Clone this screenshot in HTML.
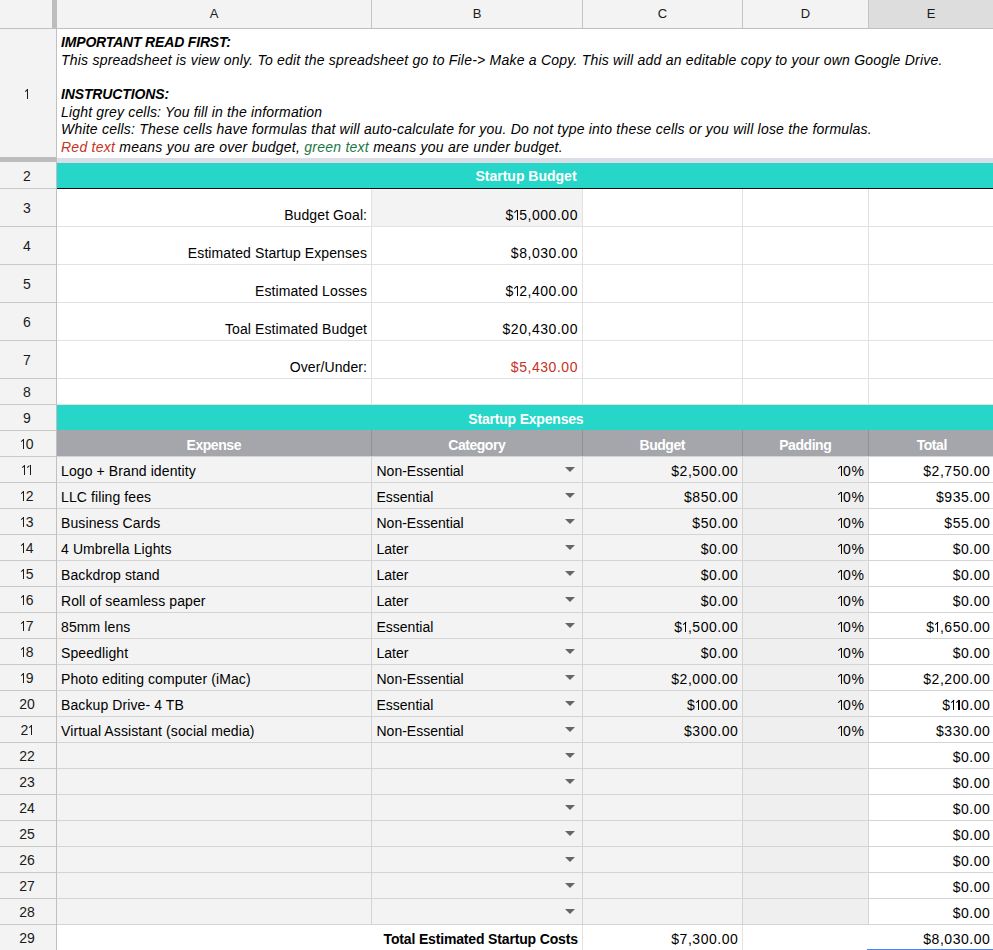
<!DOCTYPE html>
<html><head><meta charset="utf-8"><style>
html,body{margin:0;padding:0;}
body{width:993px;height:950px;position:relative;overflow:hidden;background:#fff;font-family:"Liberation Sans",sans-serif;color:#000;font-size:14px;}
.b{position:absolute;}
.t{position:absolute;white-space:nowrap;line-height:20px;}
.o{display:inline-block;position:relative;width:5.2px;height:9.7px;}
.o::before{content:'';position:absolute;left:2.65px;top:0;width:1.15px;height:9.7px;background:currentColor;}
.o::after{content:'';position:absolute;left:-0.6px;top:0;width:3.5px;height:1.15px;background:currentColor;transform:rotate(-42deg);transform-origin:100% 0;}
.o.s{width:5.2px;height:9.8px;}
.o.s::before{height:9.8px;width:1.1px;left:2.5px;}
.o.s::after{width:3.3px;height:1.1px;left:-0.8px;}
.a{position:absolute;left:564.6px;width:0;height:0;border-left:5px solid transparent;border-right:5px solid transparent;border-top:5px solid #666;}
</style></head><body>
<div class="b" style="left:0px;top:0px;width:993px;height:28px;background:#f3f3f3;"></div>
<div class="b" style="left:869px;top:0px;width:124px;height:28px;background:#dddddd;"></div>
<div class="b" style="left:0px;top:29px;width:56px;height:921px;background:#f3f3f3;"></div>
<div class="b" style="left:57px;top:163px;width:936px;height:25px;background:#26d6c9;"></div>
<div class="b" style="left:57px;top:188px;width:936px;height:1px;background:#111111;"></div>
<div class="b" style="left:372px;top:189px;width:210px;height:37px;background:#f3f3f3;"></div>
<div class="b" style="left:57px;top:405px;width:936px;height:25px;background:#26d6c9;"></div>
<div class="b" style="left:57px;top:404px;width:936px;height:1px;background:#22bdb1;"></div>
<div class="b" style="left:57px;top:430px;width:936px;height:26px;background:#a4a6ab;"></div>
<div class="b" style="left:57px;top:457px;width:685px;height:467px;background:#f3f3f3;"></div>
<div class="b" style="left:743px;top:457px;width:125px;height:467px;background:#efefef;"></div>
<div class="b" style="left:0px;top:28px;width:993px;height:1px;background:#c0c0c0;"></div>
<div class="b" style="left:371px;top:0px;width:1px;height:28px;background:#c4c4c4;"></div>
<div class="b" style="left:582px;top:0px;width:1px;height:28px;background:#c4c4c4;"></div>
<div class="b" style="left:742px;top:0px;width:1px;height:28px;background:#c4c4c4;"></div>
<div class="b" style="left:868px;top:0px;width:1px;height:28px;background:#c4c4c4;"></div>
<div class="b" style="left:52px;top:0px;width:5px;height:28px;background:#bdbdbd;"></div>
<div class="b" style="left:56px;top:28px;width:1px;height:922px;background:#c0c0c0;"></div>
<div class="b" style="left:0px;top:157px;width:56px;height:5px;background:#bcbcbc;"></div>
<div class="b" style="left:57px;top:158px;width:936px;height:5px;background:#dadde6;"></div>
<div class="b" style="left:0px;top:188px;width:56px;height:1px;background:#c8c8c8;"></div>
<div class="b" style="left:0px;top:226px;width:56px;height:1px;background:#c8c8c8;"></div>
<div class="b" style="left:0px;top:264px;width:56px;height:1px;background:#c8c8c8;"></div>
<div class="b" style="left:0px;top:302px;width:56px;height:1px;background:#c8c8c8;"></div>
<div class="b" style="left:0px;top:340px;width:56px;height:1px;background:#c8c8c8;"></div>
<div class="b" style="left:0px;top:378px;width:56px;height:1px;background:#c8c8c8;"></div>
<div class="b" style="left:0px;top:404px;width:56px;height:1px;background:#c8c8c8;"></div>
<div class="b" style="left:0px;top:430px;width:56px;height:1px;background:#c8c8c8;"></div>
<div class="b" style="left:0px;top:456px;width:56px;height:1px;background:#c8c8c8;"></div>
<div class="b" style="left:0px;top:482px;width:56px;height:1px;background:#c8c8c8;"></div>
<div class="b" style="left:0px;top:508px;width:56px;height:1px;background:#c8c8c8;"></div>
<div class="b" style="left:0px;top:534px;width:56px;height:1px;background:#c8c8c8;"></div>
<div class="b" style="left:0px;top:560px;width:56px;height:1px;background:#c8c8c8;"></div>
<div class="b" style="left:0px;top:586px;width:56px;height:1px;background:#c8c8c8;"></div>
<div class="b" style="left:0px;top:612px;width:56px;height:1px;background:#c8c8c8;"></div>
<div class="b" style="left:0px;top:638px;width:56px;height:1px;background:#c8c8c8;"></div>
<div class="b" style="left:0px;top:664px;width:56px;height:1px;background:#c8c8c8;"></div>
<div class="b" style="left:0px;top:690px;width:56px;height:1px;background:#c8c8c8;"></div>
<div class="b" style="left:0px;top:716px;width:56px;height:1px;background:#c8c8c8;"></div>
<div class="b" style="left:0px;top:742px;width:56px;height:1px;background:#c8c8c8;"></div>
<div class="b" style="left:0px;top:768px;width:56px;height:1px;background:#c8c8c8;"></div>
<div class="b" style="left:0px;top:794px;width:56px;height:1px;background:#c8c8c8;"></div>
<div class="b" style="left:0px;top:820px;width:56px;height:1px;background:#c8c8c8;"></div>
<div class="b" style="left:0px;top:846px;width:56px;height:1px;background:#c8c8c8;"></div>
<div class="b" style="left:0px;top:872px;width:56px;height:1px;background:#c8c8c8;"></div>
<div class="b" style="left:0px;top:898px;width:56px;height:1px;background:#c8c8c8;"></div>
<div class="b" style="left:0px;top:924px;width:56px;height:1px;background:#c8c8c8;"></div>
<div class="b" style="left:57px;top:226px;width:936px;height:1px;background:#e2e2e2;"></div>
<div class="b" style="left:57px;top:264px;width:936px;height:1px;background:#e2e2e2;"></div>
<div class="b" style="left:57px;top:302px;width:936px;height:1px;background:#e2e2e2;"></div>
<div class="b" style="left:57px;top:340px;width:936px;height:1px;background:#e2e2e2;"></div>
<div class="b" style="left:57px;top:378px;width:936px;height:1px;background:#e2e2e2;"></div>
<div class="b" style="left:57px;top:404px;width:936px;height:1px;background:#e2e2e2;"></div>
<div class="b" style="left:371px;top:189px;width:1px;height:216px;background:#e2e2e2;"></div>
<div class="b" style="left:582px;top:189px;width:1px;height:216px;background:#e2e2e2;"></div>
<div class="b" style="left:742px;top:189px;width:1px;height:216px;background:#e2e2e2;"></div>
<div class="b" style="left:868px;top:189px;width:1px;height:216px;background:#e2e2e2;"></div>
<div class="b" style="left:371px;top:430px;width:1px;height:26px;background:#909095;"></div>
<div class="b" style="left:582px;top:430px;width:1px;height:26px;background:#909095;"></div>
<div class="b" style="left:742px;top:430px;width:1px;height:26px;background:#909095;"></div>
<div class="b" style="left:868px;top:430px;width:1px;height:26px;background:#909095;"></div>
<div class="b" style="left:57px;top:456px;width:936px;height:1px;background:#d4d4d4;"></div>
<div class="b" style="left:57px;top:482px;width:936px;height:1px;background:#d4d4d4;"></div>
<div class="b" style="left:57px;top:508px;width:936px;height:1px;background:#d4d4d4;"></div>
<div class="b" style="left:57px;top:534px;width:936px;height:1px;background:#d4d4d4;"></div>
<div class="b" style="left:57px;top:560px;width:936px;height:1px;background:#d4d4d4;"></div>
<div class="b" style="left:57px;top:586px;width:936px;height:1px;background:#d4d4d4;"></div>
<div class="b" style="left:57px;top:612px;width:936px;height:1px;background:#d4d4d4;"></div>
<div class="b" style="left:57px;top:638px;width:936px;height:1px;background:#d4d4d4;"></div>
<div class="b" style="left:57px;top:664px;width:936px;height:1px;background:#d4d4d4;"></div>
<div class="b" style="left:57px;top:690px;width:936px;height:1px;background:#d4d4d4;"></div>
<div class="b" style="left:57px;top:716px;width:936px;height:1px;background:#d4d4d4;"></div>
<div class="b" style="left:57px;top:742px;width:936px;height:1px;background:#d4d4d4;"></div>
<div class="b" style="left:57px;top:768px;width:936px;height:1px;background:#d4d4d4;"></div>
<div class="b" style="left:57px;top:794px;width:936px;height:1px;background:#d4d4d4;"></div>
<div class="b" style="left:57px;top:820px;width:936px;height:1px;background:#d4d4d4;"></div>
<div class="b" style="left:57px;top:846px;width:936px;height:1px;background:#d4d4d4;"></div>
<div class="b" style="left:57px;top:872px;width:936px;height:1px;background:#d4d4d4;"></div>
<div class="b" style="left:57px;top:898px;width:936px;height:1px;background:#d4d4d4;"></div>
<div class="b" style="left:57px;top:924px;width:936px;height:1px;background:#d4d4d4;"></div>
<div class="b" style="left:371px;top:457px;width:1px;height:467px;background:#d4d4d4;"></div>
<div class="b" style="left:582px;top:457px;width:1px;height:467px;background:#d4d4d4;"></div>
<div class="b" style="left:742px;top:457px;width:1px;height:467px;background:#d4d4d4;"></div>
<div class="b" style="left:868px;top:457px;width:1px;height:467px;background:#d4d4d4;"></div>
<div class="b" style="left:582px;top:925px;width:1px;height:25px;background:#e2e2e2;"></div>
<div class="b" style="left:742px;top:925px;width:1px;height:25px;background:#e2e2e2;"></div>
<div class="b" style="left:867px;top:949px;width:126px;height:1px;background:#4285f4;"></div>
<div class="t" style="left:57.00px;width:314.00px;top:3.50px;text-align:center;font-size:13px;color:#1a1a1a;">A</div>
<div class="t" style="left:372.00px;width:210.00px;top:3.50px;text-align:center;font-size:13px;color:#1a1a1a;">B</div>
<div class="t" style="left:583.00px;width:159.00px;top:3.50px;text-align:center;font-size:13px;color:#1a1a1a;">C</div>
<div class="t" style="left:743.00px;width:125.00px;top:3.50px;text-align:center;font-size:13px;color:#1a1a1a;">D</div>
<div class="t" style="left:869.00px;width:124.00px;top:3.50px;text-align:center;font-size:13px;color:#1a1a1a;">E</div>
<div class="t" style="left:0.05px;width:54.00px;top:84.05px;text-align:center;letter-spacing:0.1px;color:#1a1a1a;"><span class="o s"></span></div>
<div class="t" style="left:0.05px;width:54.00px;top:166.05px;text-align:center;letter-spacing:0.1px;color:#1a1a1a;">2</div>
<div class="t" style="left:0.05px;width:54.00px;top:198.05px;text-align:center;letter-spacing:0.1px;color:#1a1a1a;">3</div>
<div class="t" style="left:0.05px;width:54.00px;top:236.05px;text-align:center;letter-spacing:0.1px;color:#1a1a1a;">4</div>
<div class="t" style="left:0.05px;width:54.00px;top:274.05px;text-align:center;letter-spacing:0.1px;color:#1a1a1a;">5</div>
<div class="t" style="left:0.05px;width:54.00px;top:312.05px;text-align:center;letter-spacing:0.1px;color:#1a1a1a;">6</div>
<div class="t" style="left:0.05px;width:54.00px;top:350.05px;text-align:center;letter-spacing:0.1px;color:#1a1a1a;">7</div>
<div class="t" style="left:0.05px;width:54.00px;top:382.05px;text-align:center;letter-spacing:0.1px;color:#1a1a1a;">8</div>
<div class="t" style="left:0.05px;width:54.00px;top:408.05px;text-align:center;letter-spacing:0.1px;color:#1a1a1a;">9</div>
<div class="t" style="left:0.05px;width:54.00px;top:434.05px;text-align:center;letter-spacing:0.1px;color:#1a1a1a;"><span class="o s"></span>0</div>
<div class="t" style="left:0.05px;width:54.00px;top:460.05px;text-align:center;letter-spacing:0.1px;color:#1a1a1a;"><span class="o s"></span><span class="o s"></span></div>
<div class="t" style="left:0.05px;width:54.00px;top:486.05px;text-align:center;letter-spacing:0.1px;color:#1a1a1a;"><span class="o s"></span>2</div>
<div class="t" style="left:0.05px;width:54.00px;top:512.05px;text-align:center;letter-spacing:0.1px;color:#1a1a1a;"><span class="o s"></span>3</div>
<div class="t" style="left:0.05px;width:54.00px;top:538.05px;text-align:center;letter-spacing:0.1px;color:#1a1a1a;"><span class="o s"></span>4</div>
<div class="t" style="left:0.05px;width:54.00px;top:564.05px;text-align:center;letter-spacing:0.1px;color:#1a1a1a;"><span class="o s"></span>5</div>
<div class="t" style="left:0.05px;width:54.00px;top:590.05px;text-align:center;letter-spacing:0.1px;color:#1a1a1a;"><span class="o s"></span>6</div>
<div class="t" style="left:0.05px;width:54.00px;top:616.05px;text-align:center;letter-spacing:0.1px;color:#1a1a1a;"><span class="o s"></span>7</div>
<div class="t" style="left:0.05px;width:54.00px;top:642.05px;text-align:center;letter-spacing:0.1px;color:#1a1a1a;"><span class="o s"></span>8</div>
<div class="t" style="left:0.05px;width:54.00px;top:668.05px;text-align:center;letter-spacing:0.1px;color:#1a1a1a;"><span class="o s"></span>9</div>
<div class="t" style="left:0.05px;width:54.00px;top:694.05px;text-align:center;letter-spacing:0.1px;color:#1a1a1a;">20</div>
<div class="t" style="left:0.05px;width:54.00px;top:720.05px;text-align:center;letter-spacing:0.1px;color:#1a1a1a;">2<span class="o s"></span></div>
<div class="t" style="left:0.05px;width:54.00px;top:746.05px;text-align:center;letter-spacing:0.1px;color:#1a1a1a;">22</div>
<div class="t" style="left:0.05px;width:54.00px;top:772.05px;text-align:center;letter-spacing:0.1px;color:#1a1a1a;">23</div>
<div class="t" style="left:0.05px;width:54.00px;top:798.05px;text-align:center;letter-spacing:0.1px;color:#1a1a1a;">24</div>
<div class="t" style="left:0.05px;width:54.00px;top:824.05px;text-align:center;letter-spacing:0.1px;color:#1a1a1a;">25</div>
<div class="t" style="left:0.05px;width:54.00px;top:850.05px;text-align:center;letter-spacing:0.1px;color:#1a1a1a;">26</div>
<div class="t" style="left:0.05px;width:54.00px;top:876.05px;text-align:center;letter-spacing:0.1px;color:#1a1a1a;">27</div>
<div class="t" style="left:0.05px;width:54.00px;top:902.05px;text-align:center;letter-spacing:0.1px;color:#1a1a1a;">28</div>
<div class="t" style="left:0.05px;width:54.00px;top:928.05px;text-align:center;letter-spacing:0.1px;color:#1a1a1a;">29</div>
<div class="t" style="left:61.00px;width:929.00px;top:32.15px;text-align:left;letter-spacing:-0.17px;font-style:italic;"><b>IMPORTANT READ FIRST:</b></div>
<div class="t" style="left:61.00px;width:929.00px;top:49.55px;text-align:left;letter-spacing:0.22px;font-style:italic;">This spreadsheet is view only. To edit the spreadsheet go to File-&gt; Make a Copy. This will add an editable copy to your own Google Drive.</div>
<div class="t" style="left:61.00px;width:929.00px;top:84.35px;text-align:left;letter-spacing:-0.13px;font-style:italic;"><b>INSTRUCTIONS:</b></div>
<div class="t" style="left:61.00px;width:929.00px;top:101.75px;text-align:left;letter-spacing:0.17px;font-style:italic;">Light grey cells: You fill in the information</div>
<div class="t" style="left:61.00px;width:929.00px;top:119.15px;text-align:left;letter-spacing:0.213px;font-style:italic;">White cells: These cells have formulas that will auto-calculate for you. Do not type into these cells or you will lose the formulas.</div>
<div class="t" style="left:61.00px;width:929.00px;top:136.55px;text-align:left;letter-spacing:0.25px;font-style:italic;"><span style="color:#c63224">Red text</span> means you are over budget, <span style="color:#217846">green text</span> means you are under budget.</div>
<div class="t" style="left:57.00px;width:938.00px;top:166.45px;text-align:center;color:#ffffff;font-weight:bold;">Startup Budget</div>
<div class="t" style="left:60.00px;width:307.10px;top:204.75px;text-align:right;letter-spacing:0.1px;">Budget Goal:</div>
<div class="t" style="left:375.00px;width:203.05px;top:204.75px;text-align:right;letter-spacing:0.55px;">$<span class="o"></span>5,000.00</div>
<div class="t" style="left:60.00px;width:307.10px;top:242.75px;text-align:right;letter-spacing:0.1px;">Estimated Startup Expenses</div>
<div class="t" style="left:375.00px;width:203.05px;top:242.75px;text-align:right;letter-spacing:0.55px;">$8,030.00</div>
<div class="t" style="left:60.00px;width:307.10px;top:280.75px;text-align:right;letter-spacing:0.1px;">Estimated Losses</div>
<div class="t" style="left:375.00px;width:203.05px;top:280.75px;text-align:right;letter-spacing:0.55px;">$<span class="o"></span>2,400.00</div>
<div class="t" style="left:60.00px;width:307.10px;top:318.75px;text-align:right;letter-spacing:0.1px;">Toal Estimated Budget</div>
<div class="t" style="left:375.00px;width:203.05px;top:318.75px;text-align:right;letter-spacing:0.55px;">$20,430.00</div>
<div class="t" style="left:60.00px;width:307.10px;top:356.75px;text-align:right;letter-spacing:0.1px;">Over/Under:</div>
<div class="t" style="left:375.00px;width:203.05px;top:356.75px;text-align:right;letter-spacing:0.55px;color:#c63224;">$5,430.00</div>
<div class="t" style="left:56.90px;width:938.00px;top:409.15px;text-align:center;letter-spacing:-0.2px;color:#ffffff;font-weight:bold;">Startup Expenses</div>
<div class="t" style="left:56.77px;width:314.00px;top:435.15px;text-align:center;letter-spacing:-0.45px;color:#ffffff;font-weight:bold;">Expense</div>
<div class="t" style="left:371.77px;width:210.00px;top:435.15px;text-align:center;letter-spacing:-0.45px;color:#ffffff;font-weight:bold;">Category</div>
<div class="t" style="left:582.77px;width:159.00px;top:435.15px;text-align:center;letter-spacing:-0.45px;color:#ffffff;font-weight:bold;">Budget</div>
<div class="t" style="left:742.77px;width:125.00px;top:435.15px;text-align:center;letter-spacing:-0.45px;color:#ffffff;font-weight:bold;">Padding</div>
<div class="t" style="left:868.77px;width:126.00px;top:435.15px;text-align:center;letter-spacing:-0.45px;color:#ffffff;font-weight:bold;">Total</div>
<div class="t" style="left:61.00px;width:307.00px;top:461.15px;text-align:left;letter-spacing:0.1px;">Logo + Brand identity</div>
<div class="t" style="left:376.50px;width:183.50px;top:461.15px;text-align:left;">Non-Essential</div>
<div class="t" style="left:585.00px;width:153.45px;top:461.15px;text-align:right;letter-spacing:0.55px;">$2,500.00</div>
<div class="t" style="left:745.00px;width:119.45px;top:461.15px;text-align:right;letter-spacing:0.55px;"><span class="o"></span>0%</div>
<div class="t" style="left:871.00px;width:119.45px;top:461.15px;text-align:right;letter-spacing:0.55px;">$2,750.00</div>
<div class="a" style="top:466.9px"></div>
<div class="t" style="left:61.00px;width:307.00px;top:487.15px;text-align:left;letter-spacing:0.1px;">LLC filing fees</div>
<div class="t" style="left:376.50px;width:183.50px;top:487.15px;text-align:left;">Essential</div>
<div class="t" style="left:585.00px;width:153.45px;top:487.15px;text-align:right;letter-spacing:0.55px;">$850.00</div>
<div class="t" style="left:745.00px;width:119.45px;top:487.15px;text-align:right;letter-spacing:0.55px;"><span class="o"></span>0%</div>
<div class="t" style="left:871.00px;width:119.45px;top:487.15px;text-align:right;letter-spacing:0.55px;">$935.00</div>
<div class="a" style="top:492.9px"></div>
<div class="t" style="left:61.00px;width:307.00px;top:513.15px;text-align:left;letter-spacing:0.1px;">Business Cards</div>
<div class="t" style="left:376.50px;width:183.50px;top:513.15px;text-align:left;">Non-Essential</div>
<div class="t" style="left:585.00px;width:153.45px;top:513.15px;text-align:right;letter-spacing:0.55px;">$50.00</div>
<div class="t" style="left:745.00px;width:119.45px;top:513.15px;text-align:right;letter-spacing:0.55px;"><span class="o"></span>0%</div>
<div class="t" style="left:871.00px;width:119.45px;top:513.15px;text-align:right;letter-spacing:0.55px;">$55.00</div>
<div class="a" style="top:518.9px"></div>
<div class="t" style="left:61.00px;width:307.00px;top:539.15px;text-align:left;letter-spacing:0.1px;">4 Umbrella Lights</div>
<div class="t" style="left:376.50px;width:183.50px;top:539.15px;text-align:left;">Later</div>
<div class="t" style="left:585.00px;width:153.45px;top:539.15px;text-align:right;letter-spacing:0.55px;">$0.00</div>
<div class="t" style="left:745.00px;width:119.45px;top:539.15px;text-align:right;letter-spacing:0.55px;"><span class="o"></span>0%</div>
<div class="t" style="left:871.00px;width:119.45px;top:539.15px;text-align:right;letter-spacing:0.55px;">$0.00</div>
<div class="a" style="top:544.9px"></div>
<div class="t" style="left:61.00px;width:307.00px;top:565.15px;text-align:left;letter-spacing:0.1px;">Backdrop stand</div>
<div class="t" style="left:376.50px;width:183.50px;top:565.15px;text-align:left;">Later</div>
<div class="t" style="left:585.00px;width:153.45px;top:565.15px;text-align:right;letter-spacing:0.55px;">$0.00</div>
<div class="t" style="left:745.00px;width:119.45px;top:565.15px;text-align:right;letter-spacing:0.55px;"><span class="o"></span>0%</div>
<div class="t" style="left:871.00px;width:119.45px;top:565.15px;text-align:right;letter-spacing:0.55px;">$0.00</div>
<div class="a" style="top:570.9px"></div>
<div class="t" style="left:61.00px;width:307.00px;top:591.15px;text-align:left;letter-spacing:0.1px;">Roll of seamless paper</div>
<div class="t" style="left:376.50px;width:183.50px;top:591.15px;text-align:left;">Later</div>
<div class="t" style="left:585.00px;width:153.45px;top:591.15px;text-align:right;letter-spacing:0.55px;">$0.00</div>
<div class="t" style="left:745.00px;width:119.45px;top:591.15px;text-align:right;letter-spacing:0.55px;"><span class="o"></span>0%</div>
<div class="t" style="left:871.00px;width:119.45px;top:591.15px;text-align:right;letter-spacing:0.55px;">$0.00</div>
<div class="a" style="top:596.9px"></div>
<div class="t" style="left:61.00px;width:307.00px;top:617.15px;text-align:left;letter-spacing:0.1px;">85mm lens</div>
<div class="t" style="left:376.50px;width:183.50px;top:617.15px;text-align:left;">Essential</div>
<div class="t" style="left:585.00px;width:153.45px;top:617.15px;text-align:right;letter-spacing:0.55px;">$<span class="o"></span>,500.00</div>
<div class="t" style="left:745.00px;width:119.45px;top:617.15px;text-align:right;letter-spacing:0.55px;"><span class="o"></span>0%</div>
<div class="t" style="left:871.00px;width:119.45px;top:617.15px;text-align:right;letter-spacing:0.55px;">$<span class="o"></span>,650.00</div>
<div class="a" style="top:622.9px"></div>
<div class="t" style="left:61.00px;width:307.00px;top:643.15px;text-align:left;letter-spacing:0.1px;">Speedlight</div>
<div class="t" style="left:376.50px;width:183.50px;top:643.15px;text-align:left;">Later</div>
<div class="t" style="left:585.00px;width:153.45px;top:643.15px;text-align:right;letter-spacing:0.55px;">$0.00</div>
<div class="t" style="left:745.00px;width:119.45px;top:643.15px;text-align:right;letter-spacing:0.55px;"><span class="o"></span>0%</div>
<div class="t" style="left:871.00px;width:119.45px;top:643.15px;text-align:right;letter-spacing:0.55px;">$0.00</div>
<div class="a" style="top:648.9px"></div>
<div class="t" style="left:61.00px;width:307.00px;top:669.15px;text-align:left;letter-spacing:0.1px;">Photo editing computer (iMac)</div>
<div class="t" style="left:376.50px;width:183.50px;top:669.15px;text-align:left;">Non-Essential</div>
<div class="t" style="left:585.00px;width:153.45px;top:669.15px;text-align:right;letter-spacing:0.55px;">$2,000.00</div>
<div class="t" style="left:745.00px;width:119.45px;top:669.15px;text-align:right;letter-spacing:0.55px;"><span class="o"></span>0%</div>
<div class="t" style="left:871.00px;width:119.45px;top:669.15px;text-align:right;letter-spacing:0.55px;">$2,200.00</div>
<div class="a" style="top:674.9px"></div>
<div class="t" style="left:61.00px;width:307.00px;top:695.15px;text-align:left;letter-spacing:0.1px;">Backup Drive- 4 TB</div>
<div class="t" style="left:376.50px;width:183.50px;top:695.15px;text-align:left;">Essential</div>
<div class="t" style="left:585.00px;width:153.45px;top:695.15px;text-align:right;letter-spacing:0.55px;">$<span class="o"></span>00.00</div>
<div class="t" style="left:745.00px;width:119.45px;top:695.15px;text-align:right;letter-spacing:0.55px;"><span class="o"></span>0%</div>
<div class="t" style="left:871.00px;width:119.45px;top:695.15px;text-align:right;letter-spacing:0.55px;">$<span class="o"></span><span class="o"></span>0.00</div>
<div class="a" style="top:700.9px"></div>
<div class="t" style="left:61.00px;width:307.00px;top:721.15px;text-align:left;letter-spacing:0.1px;">Virtual Assistant (social media)</div>
<div class="t" style="left:376.50px;width:183.50px;top:721.15px;text-align:left;">Non-Essential</div>
<div class="t" style="left:585.00px;width:153.45px;top:721.15px;text-align:right;letter-spacing:0.55px;">$300.00</div>
<div class="t" style="left:745.00px;width:119.45px;top:721.15px;text-align:right;letter-spacing:0.55px;"><span class="o"></span>0%</div>
<div class="t" style="left:871.00px;width:119.45px;top:721.15px;text-align:right;letter-spacing:0.55px;">$330.00</div>
<div class="a" style="top:726.9px"></div>
<div class="t" style="left:871.00px;width:119.45px;top:747.15px;text-align:right;letter-spacing:0.55px;">$0.00</div>
<div class="a" style="top:752.9px"></div>
<div class="t" style="left:871.00px;width:119.45px;top:773.15px;text-align:right;letter-spacing:0.55px;">$0.00</div>
<div class="a" style="top:778.9px"></div>
<div class="t" style="left:871.00px;width:119.45px;top:799.15px;text-align:right;letter-spacing:0.55px;">$0.00</div>
<div class="a" style="top:804.9px"></div>
<div class="t" style="left:871.00px;width:119.45px;top:825.15px;text-align:right;letter-spacing:0.55px;">$0.00</div>
<div class="a" style="top:830.9px"></div>
<div class="t" style="left:871.00px;width:119.45px;top:851.15px;text-align:right;letter-spacing:0.55px;">$0.00</div>
<div class="a" style="top:856.9px"></div>
<div class="t" style="left:871.00px;width:119.45px;top:877.15px;text-align:right;letter-spacing:0.55px;">$0.00</div>
<div class="a" style="top:882.9px"></div>
<div class="t" style="left:871.00px;width:119.45px;top:903.15px;text-align:right;letter-spacing:0.55px;">$0.00</div>
<div class="a" style="top:908.9px"></div>
<div class="t" style="left:375.00px;width:202.84px;top:929.15px;text-align:right;letter-spacing:-0.16px;font-weight:bold;">Total Estimated Startup Costs</div>
<div class="t" style="left:585.00px;width:153.45px;top:929.15px;text-align:right;letter-spacing:0.55px;">$7,300.00</div>
<div class="t" style="left:871.00px;width:119.45px;top:929.15px;text-align:right;letter-spacing:0.55px;">$8,030.00</div>
</body></html>
